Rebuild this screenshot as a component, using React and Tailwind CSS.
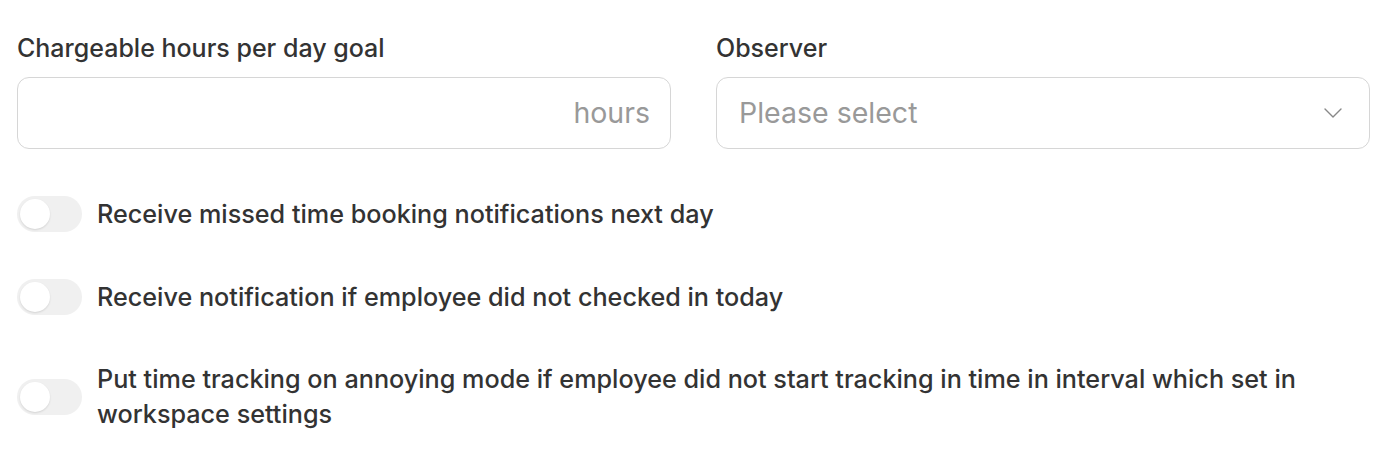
import React from "react";

const Toggle = () => (
  <div className="w-[65px] h-[36px] shrink-0 rounded-full bg-[#f0f0f0] p-[3px] flex items-center">
    <div className="w-[30px] h-[30px] rounded-full bg-white shadow-[0_1px_2px_rgba(0,0,0,0.12)]" />
  </div>
);

const ToggleRow = ({ children }) => (
  <div className="flex items-center gap-[15px]">
    <Toggle />
    <p className="text-[25.2px] leading-[35px] font-medium text-[#333]">{children}</p>
  </div>
);

const App = () => {
  return (
    <div className="w-[1390px] h-[476px] bg-white pl-[17px] pr-[20px] pt-[33px] font-['Inter',sans-serif]">
      <div className="grid grid-cols-2 gap-[45px]">
        {/* Chargeable hours */}
        <div>
          <label className="block text-[25px] leading-[30px] font-medium text-[#333] mb-[14px]">
            Chargeable hours per day goal
          </label>
          <div className="h-[72px] rounded-[12px] border border-[#d6d6d6] flex items-center justify-end px-[20px]">
            <span className="text-[28.5px] text-[#999]">hours</span>
          </div>
        </div>

        {/* Observer */}
        <div>
          <label className="block text-[25px] leading-[30px] font-medium text-[#333] mb-[14px]">
            Observer
          </label>
          <div className="h-[72px] rounded-[12px] border border-[#d6d6d6] flex items-center justify-between pl-[22px] pr-[27px]">
            <span className="text-[28.5px] text-[#999]">Please select</span>
            <svg width="18" height="10" viewBox="0 0 18 10" fill="none">
              <path d="M1 1l8 8 8-8" stroke="#888" strokeWidth="1.4" strokeLinecap="round" strokeLinejoin="round" />
            </svg>
          </div>
        </div>
      </div>

      <div className="mt-[47px] flex flex-col gap-[47px]">
        <ToggleRow>Receive missed time booking notifications next day</ToggleRow>
        <ToggleRow>Receive notification if employee did not checked in today</ToggleRow>
        <ToggleRow>
          Put time tracking on annoying mode if employee did not start tracking in time in interval which set in
          workspace settings
        </ToggleRow>
      </div>
    </div>
  );
};

export default App;
